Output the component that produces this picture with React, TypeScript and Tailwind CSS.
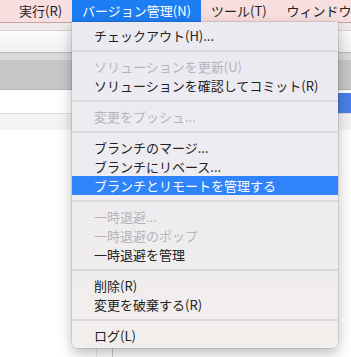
const font = { fontFamily: '"Noto Sans CJK JP", "Noto Sans", sans-serif' };

type Entry =
	| { kind: "item"; label: string; disabled?: boolean; active?: boolean }
	| { kind: "sep" };

const entries: Entry[] = [
	{ kind: "item", label: "チェックアウト(H)..." },
	{ kind: "sep" },
	{ kind: "item", label: "ソリューションを更新(U)", disabled: true },
	{ kind: "item", label: "ソリューションを確認してコミット(R)" },
	{ kind: "sep" },
	{ kind: "item", label: "変更をプッシュ...", disabled: true },
	{ kind: "sep" },
	{ kind: "item", label: "ブランチのマージ..." },
	{ kind: "item", label: "ブランチにリベース..." },
	{ kind: "item", label: "ブランチとリモートを管理する", active: true },
	{ kind: "sep" },
	{ kind: "item", label: "一時退避...", disabled: true },
	{ kind: "item", label: "一時退避のポップ", disabled: true },
	{ kind: "item", label: "一時退避を管理" },
	{ kind: "sep" },
	{ kind: "item", label: "削除(R)" },
	{ kind: "item", label: "変更を破棄する(R)" },
	{ kind: "sep" },
	{ kind: "item", label: "ログ(L)" },
];

const MenuBar = () => (
	<div className="h-[23px] flex items-stretch bg-[#f8dede] border-b border-[#c7a4a4] text-[13px] text-[#222] pl-[9px] whitespace-nowrap">
		<div className="px-[10px] flex items-center">実行(R)</div>
		<div className="px-[10px] flex items-center bg-[#1d7df3] text-white">バージョン管理(N)</div>
		<div className="px-[10px] flex items-center">ツール(T)</div>
		<div className="px-[10px] flex items-center">ウィンドウ(W)</div>
	</div>
);

const Backdrop = () => (
	<div className="flex flex-col">
		<div className="h-[8px] bg-[#efe9e9] border-b border-[#d6d3d3]" />
		<div className="h-[22px] bg-gradient-to-b from-[#fbfbfb] to-[#f1f1f1] border-b border-[#b9b9b9]" />
		<div className="h-[7px] bg-[#d9d9d9]" />
		<div className="h-[30px] bg-[#c6c6c6] border-b border-[#b5b5b5]" />
		<div className="h-[3px] bg-white" />
		<div className="h-[20px] flex">
			<div className="flex-1 bg-white" />
			<div className="w-[13px] bg-[#4a80ea]" />
		</div>
		<div className="h-[17px] bg-[#f3f3f3] border-t border-[#dedede]" />
		<div className="h-[227px] flex bg-white">
			<div className="w-[97px] border-r border-[#e6e6e6]" />
			<div className="w-[16px] border-r border-[#c9c9c9]" />
			<div className="flex-1" />
		</div>
	</div>
);

const Menu = () => (
	<div className="absolute left-[72px] top-[22px] w-[266px] pt-[4px] pb-[3px] rounded-b-[6px] bg-gradient-to-b from-[#ebeaf1] via-[#eeecf0] to-[#f2eeec] shadow-[0_5px_14px_rgba(0,0,0,0.28),0_0_0_0.5px_rgba(0,0,0,0.18)] text-[13px] whitespace-nowrap">
		{entries.map((e, i) =>
			e.kind === "sep" ? (
				<div key={i} className="my-[5px] h-[2px] bg-[#dbd9de]" />
			) : (
				<div
					key={i}
					className={`h-[19px] pl-[22px] flex items-center ${
						e.active
							? "bg-[#2f84fb] text-white"
							: e.disabled
								? "text-[#b6b4ba]"
								: "text-[#222]"
					}`}
				>
					{e.label}
				</div>
			),
		)}
	</div>
);

export default function App() {
	return (
		<div className="relative w-[351px] h-[357px] overflow-hidden bg-white" style={font}>
			<MenuBar />
			<Backdrop />
			<Menu />
		</div>
	);
}
